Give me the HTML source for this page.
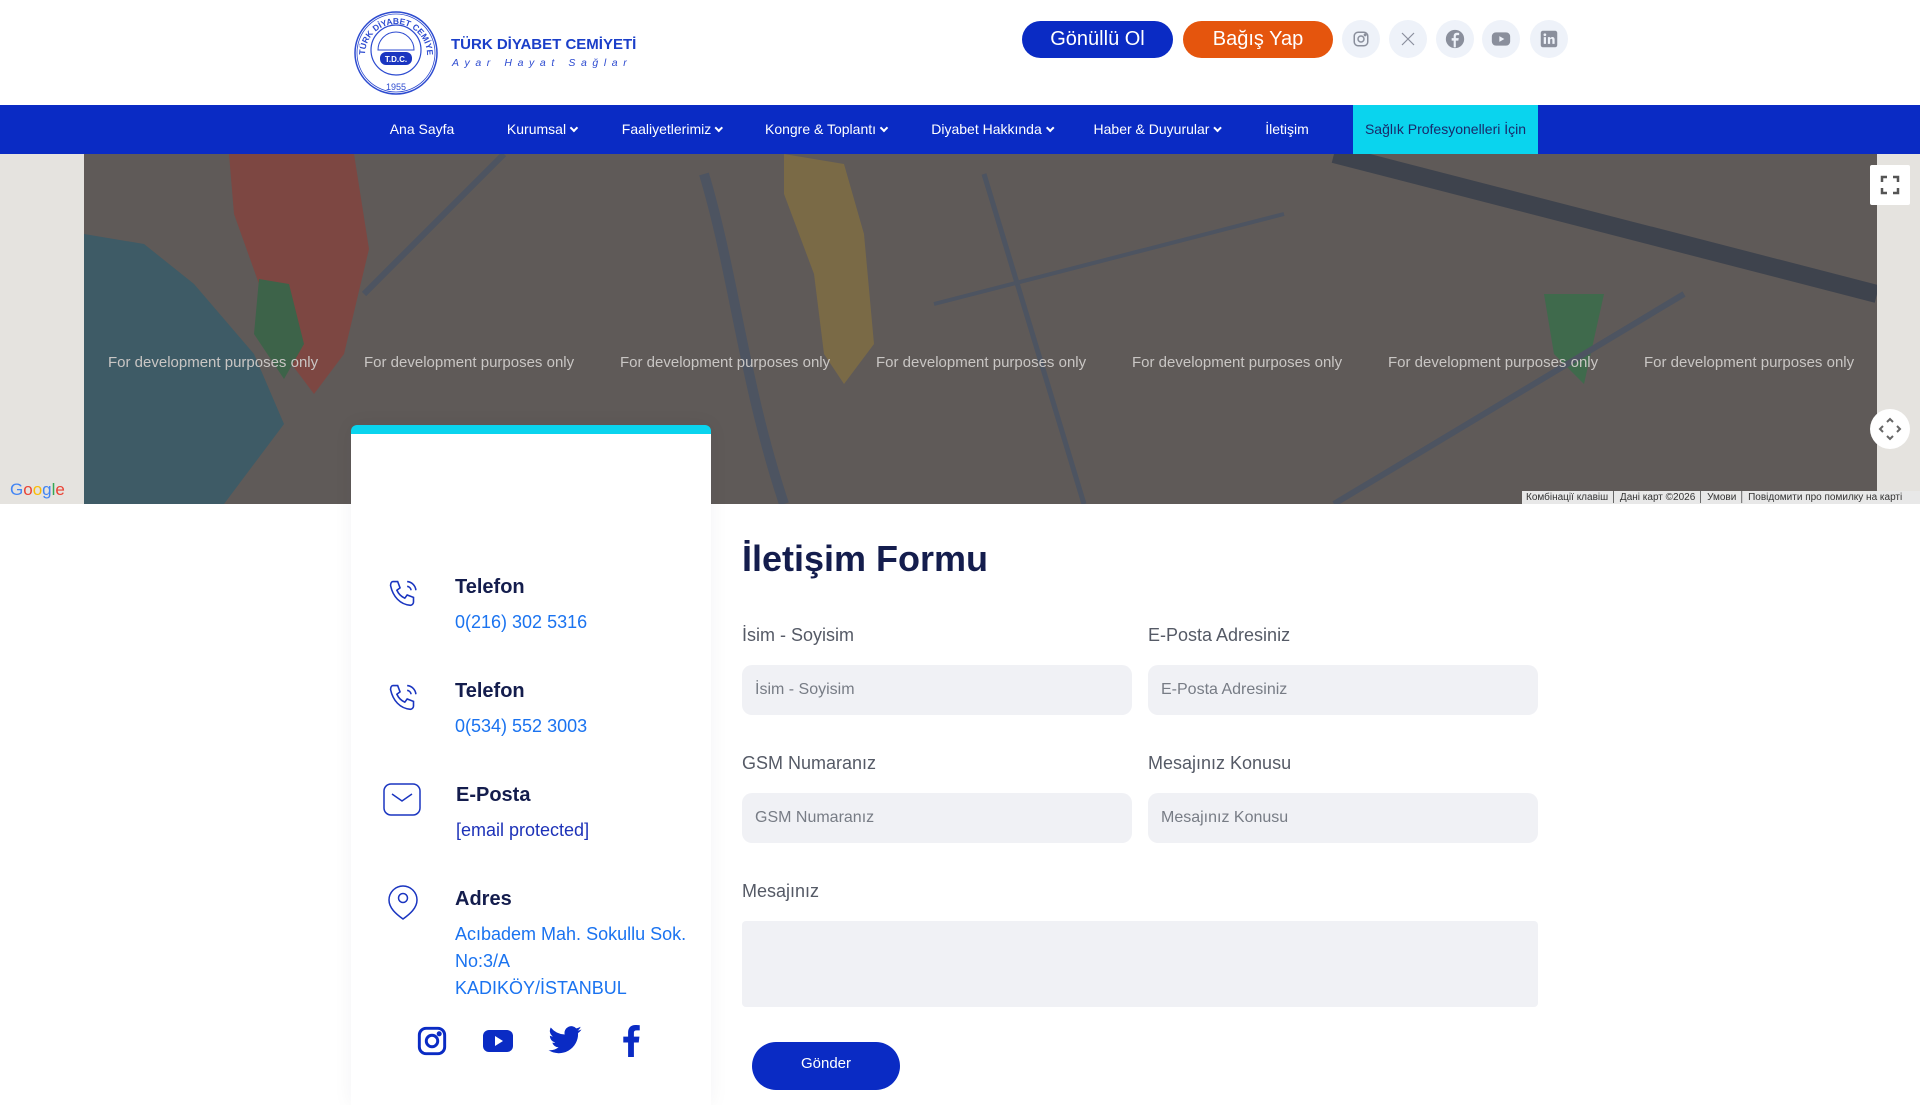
<!DOCTYPE html>
<html><head><meta charset="utf-8">
<style>
*{margin:0;padding:0;box-sizing:border-box}
body{width:1920px;height:1080px;overflow:hidden;background:#fff;font-family:"Liberation Sans",Arial,sans-serif;position:relative}
.abs{position:absolute}
.btn{position:absolute;top:21px;height:37px;border-radius:19px;color:#fff;font-size:20px;display:flex;align-items:center;justify-content:center}
.soc{position:absolute;top:20px;width:38px;height:38px;border-radius:50%;background:#eef2f9;display:flex;align-items:center;justify-content:center}
nav{position:absolute;top:105px;left:0;width:1920px;height:49px;background:#0a2bc4}
nav span{position:absolute;top:0;line-height:49px;color:#fff;font-size:14px;transform:translateX(-50%);white-space:nowrap}
nav span i{display:inline-block;width:6px;height:6px;border-right:2px solid #fff;border-bottom:2px solid #fff;transform:rotate(45deg);margin-left:5px;position:relative;top:-3px}
.map{position:absolute;top:154px;left:0;width:1920px;height:350px;background:#e5e3df;overflow:hidden}
.dev{position:absolute;top:200px;color:#c9c6c4;font-size:15px;white-space:nowrap}
.card{position:absolute;left:351px;top:425px;width:360px;height:680px;background:#fff;border-top:9px solid #0ad4ee;border-radius:6px 6px 0 0;box-shadow:0 0 20px rgba(0,0,60,.05)}
.it h4{position:absolute;left:104px;font-size:20px;color:#141d4d;font-weight:bold}
.it p{position:absolute;left:104px;font-size:18px;color:#1a73f0;line-height:27px}
label.l{position:absolute;font-size:18px;color:#555a66}
.inp{position:absolute;height:50px;background:#f0f1f5;border-radius:10px;font-size:16px;color:#777c85;padding-left:13px;line-height:50px}
</style></head><body>
<!-- logo -->
<svg class="abs" style="left:353px;top:10px" width="86" height="86" viewBox="0 0 86 86">
<circle cx="43" cy="43" r="41" fill="none" stroke="#2d4bd0" stroke-width="1.5"/>
<circle cx="43" cy="43" r="39" fill="none" stroke="#2d4bd0" stroke-width="0.8"/>
<circle cx="43" cy="40" r="25" fill="none" stroke="#2d4bd0" stroke-width="1.2"/>
<path d="M25 40 a18 18 0 0 1 36 0z" fill="none" stroke="#2d4bd0" stroke-width="1"/>
<rect x="27" y="42" width="32" height="13" rx="6" fill="#1a35c0"/>
<text x="43" y="52" font-size="8" fill="#fff" text-anchor="middle" font-family="Liberation Sans" font-weight="bold">T.D.C.</text>
<text x="43" y="80" font-size="9" fill="#2d4bd0" text-anchor="middle" font-family="Liberation Sans">1955</text>
<path id="arc" d="M12 45 A31 31 0 0 1 74 45" fill="none"/>
<text font-size="8.5" fill="#2d4bd0" font-family="Liberation Sans" font-weight="bold"><textPath href="#arc">TÜRK DİYABET CEMİYETİ</textPath></text>
</svg>
<div class="abs" style="left:451px;top:36px;font-size:15px;font-weight:bold;color:#1b3fc9">TÜRK DİYABET CEMİYETİ</div>
<div class="abs" style="left:452px;top:57px;font-size:10.5px;font-style:italic;color:#2d4bd0;letter-spacing:5.6px">Ayar Hayat Sağlar</div>
<!-- buttons -->
<div class="btn" style="left:1022px;width:151px;background:#0a2bc4">Gönüllü Ol</div>
<div class="btn" style="left:1183px;width:150px;background:#e5550d">Bağış Yap</div>
<div class="soc" style="left:1342px"><svg width="18" height="18" viewBox="0 0 24 24" fill="none" stroke="#8a8f9c" stroke-width="2"><rect x="3" y="3" width="18" height="18" rx="5"/><circle cx="12" cy="12" r="4"/><circle cx="17.5" cy="6.5" r="1" fill="#8a8f9c"/></svg></div>
<div class="soc" style="left:1389px"><svg width="16" height="16" viewBox="0 0 24 24" stroke="#8a8f9c" stroke-width="1.8"><path d="M3 3L21 21M21 3L3 21"/></svg></div>
<div class="soc" style="left:1436px"><svg width="20" height="20" viewBox="0 0 24 24"><circle cx="12" cy="12" r="11" fill="#8a8f9c"/><path d="M13 22v-8h3l.5-3H13V9c0-1 .4-1.6 1.7-1.6H17V4.7c-.5-.1-1.5-.2-2.6-.2-2.5 0-4 1.5-4 4.1V11H8v3h2.4v8z" fill="#eef2f9"/></svg></div>
<div class="soc" style="left:1482px"><svg width="20" height="20" viewBox="0 0 24 24"><rect x="1" y="4" width="22" height="16" rx="5" fill="#8a8f9c"/><path d="M10 8.5v7l6-3.5z" fill="#eef2f9"/></svg></div>
<div class="soc" style="left:1530px"><svg width="18" height="18" viewBox="0 0 24 24"><rect x="1" y="1" width="22" height="22" rx="3" fill="#8a8f9c"/><rect x="5" y="9.5" width="3" height="9" fill="#eef2f9"/><circle cx="6.5" cy="6.3" r="1.8" fill="#eef2f9"/><path d="M10.5 9.5h3v1.4c.6-1 1.7-1.6 3-1.6 2.3 0 3 1.5 3 3.8v5.4h-3v-4.8c0-1.2-.3-2-1.4-2s-1.6.8-1.6 2v4.8h-3z" fill="#eef2f9"/></svg></div>
<!-- nav -->
<nav>
<span style="left:422px">Ana Sayfa</span>
<span style="left:542px">Kurumsal<i></i></span>
<span style="left:672px">Faaliyetlerimiz<i></i></span>
<span style="left:826px">Kongre &amp; Toplantı<i></i></span>
<span style="left:992px">Diyabet Hakkında<i></i></span>
<span style="left:1157px">Haber &amp; Duyurular<i></i></span>
<span style="left:1287px">İletişim</span>
<div style="position:absolute;left:1353px;top:0;width:185px;height:49px;background:#0ad4ee;color:#1a2a6a;font-size:14px;line-height:49px;text-align:center">Sağlık Profesyonelleri İçin</div>
</nav>
<!-- map -->
<div class="map">
<div class="abs" style="left:84px;top:0;width:1793px;height:350px;background:#5f5a58"></div>
<svg class="abs" style="left:84px;top:0" width="1793" height="350" viewBox="0 0 1793 350">
<path d="M0 80 L0 350 L140 350 L200 270 L170 200 L110 130 L60 90Z" fill="#3e5b66"/>
<path d="M145 0 L270 0 L285 95 L260 200 L230 240 L200 200 L175 130 L150 60Z" fill="#7d4742"/>
<path d="M175 125 L205 130 L220 190 L200 225 L190 210 L170 180Z" fill="#3d6349"/>
<path d="M700 0 L760 10 L780 80 L790 190 L760 230 L740 200 L730 120 L700 40Z" fill="#7a6a46"/>
<path d="M1460 140 L1520 140 L1500 230 L1470 200Z" fill="#3f6a4c"/>
<path d="M620 20 C650 120 660 230 700 350" stroke="#4d5461" stroke-width="10" fill="none"/>
<path d="M1250 0 L1793 140" stroke="#3e434d" stroke-width="18" fill="none"/>
<path d="M420 0 L280 140" stroke="#4d5461" stroke-width="6" fill="none"/>
<path d="M900 20 L1000 350" stroke="#4d5461" stroke-width="5" fill="none"/>
<path d="M1600 140 L1250 350" stroke="#4d5461" stroke-width="6" fill="none"/>
<path d="M850 150 L1200 60" stroke="#4d5461" stroke-width="4" fill="none"/>
</svg>
<div class="dev" style="left:108px">For development purposes only</div>
<div class="dev" style="left:364px">For development purposes only</div>
<div class="dev" style="left:620px">For development purposes only</div>
<div class="dev" style="left:876px">For development purposes only</div>
<div class="dev" style="left:1132px">For development purposes only</div>
<div class="dev" style="left:1388px">For development purposes only</div>
<div class="dev" style="left:1644px">For development purposes only</div>
<div class="abs" style="left:10px;top:326px;font-size:17px;color:#4285f4">G<span style="color:#ea4335">o</span><span style="color:#fbbc05">o</span>g<span style="color:#34a853">l</span><span style="color:#ea4335">e</span></div>
<div class="abs" style="left:1522px;top:337px;height:13px;width:398px;background:#e8e8e8;font-size:10px;color:#333;line-height:13px;white-space:nowrap;padding-left:4px">Комбінації клавіш │ Дані карт ©2026 │ Умови │ Повідомити про помилку на карті</div>
<div class="abs" style="left:1870px;top:11px;width:40px;height:40px;background:#fff;border-radius:2px"><svg width="40" height="40" viewBox="0 0 40 40" fill="none" stroke="#555" stroke-width="2.5"><path d="M12 17v-5h5M23 12h5v5M28 23v5h-5M17 28h-5v-5"/></svg></div>
<div class="abs" style="left:1870px;top:255px;width:40px;height:40px;background:#fff;border-radius:50%"><svg width="40" height="40" viewBox="0 0 40 40" fill="none" stroke="#666" stroke-width="2"><path d="M17 13l3-3 3 3M17 27l3 3 3-3M13 17l-3 3 3 3M27 17l3 3-3 3"/></svg></div>
</div>
<!-- card -->
<div class="card">
<div class="it" style="position:absolute;top:-6px;left:0;width:100%">
<svg class="abs" style="left:34px;top:148px" width="38" height="38" viewBox="0 0 24 24" fill="none" stroke="#1a35c0" stroke-width="1"><path d="M5 3.5l3 0 1.5 4-2 1.5c1 2.2 2.8 4 5 5l1.5-2 4 1.5v3c0 1-1 2-2 2C9.5 18 5 13 3.5 6c0-1.5.7-2.5 1.5-2.5z"/><path d="M14 3.5a6 6 0 0 1 5.5 5.5M14 6.5a3 3 0 0 1 2.5 2.5"/></svg>
<h4 style="top:148px">Telefon</h4><p style="top:181px">0(216) 302 5316</p>
<svg class="abs" style="left:34px;top:252px" width="38" height="38" viewBox="0 0 24 24" fill="none" stroke="#1a35c0" stroke-width="1"><path d="M5 3.5l3 0 1.5 4-2 1.5c1 2.2 2.8 4 5 5l1.5-2 4 1.5v3c0 1-1 2-2 2C9.5 18 5 13 3.5 6c0-1.5.7-2.5 1.5-2.5z"/><path d="M14 3.5a6 6 0 0 1 5.5 5.5M14 6.5a3 3 0 0 1 2.5 2.5"/></svg>
<h4 style="top:252px">Telefon</h4><p style="top:285px">0(534) 552 3003</p>
<svg class="abs" style="left:32px;top:354px" width="40" height="36" viewBox="0 0 40 36" fill="none" stroke="#1a35c0" stroke-width="1.5"><rect x="1" y="2" width="36" height="31" rx="7"/><path d="M9 12l10 7 10-7"/></svg>
<h4 style="top:356px;left:105px">E-Posta</h4><p style="top:389px;left:105px;color:#1d32b8">[email protected]</p>
<svg class="abs" style="left:36px;top:455px" width="32" height="38" viewBox="0 0 32 38" fill="none" stroke="#1a35c0" stroke-width="1.5"><path d="M16 36C9 31 2 25 2 17a14 14 0 0 1 28 0c0 8-7 14-14 19z"/><circle cx="16" cy="15" r="4.5"/></svg>
<h4 style="top:460px">Adres</h4><p style="top:493px">Acıbadem Mah. Sokullu Sok.<br>No:3/A<br>KADIKÖY/İSTANBUL</p>
<svg class="abs" style="left:65px;top:597px" width="32" height="32" viewBox="0 0 24 24" fill="none" stroke="#0a2bc4" stroke-width="2.2"><rect x="2.5" y="2.5" width="19" height="19" rx="5"/><circle cx="12" cy="12" r="4.3"/><circle cx="17.4" cy="6.6" r="0.8" fill="#0a2bc4"/></svg>
<svg class="abs" style="left:131px;top:599px" width="32" height="28" viewBox="0 0 32 28"><rect x="1" y="3" width="30" height="22" rx="6" fill="#0a2bc4"/><path d="M13 9v10l8-5z" fill="#fff"/></svg>
<svg class="abs" style="left:196px;top:597px" width="36" height="32" viewBox="0 0 24 20"><path d="M23 2.3c-.8.4-1.7.6-2.6.7a4.5 4.5 0 0 0 2-2.5c-.9.5-1.9.9-2.9 1.1A4.5 4.5 0 0 0 11.8 5.7 12.8 12.8 0 0 1 2.5 1a4.5 4.5 0 0 0 1.4 6A4.4 4.4 0 0 1 1.9 6.5a4.5 4.5 0 0 0 3.6 4.5 4.5 4.5 0 0 1-2 .1 4.5 4.5 0 0 0 4.200 3.1A9 9 0 0 1 1 16.1a12.8 12.8 0 0 0 19.7-11.4c.9-.6 1.6-1.4 2.3-2.4z" fill="#0a2bc4"/></svg>
<svg class="abs" style="left:270px;top:597px" width="20" height="32" viewBox="0 0 12 22"><path d="M8 22V12h3.3l.5-4H8V5.6c0-1.1.3-1.9 1.9-1.9H12V.2C11.6.1 10.4 0 9 0 6 0 4 1.8 4 5.1V8H.7v4H4v10z" fill="#0a2bc4"/></svg>
</div>
</div>
<!-- form -->
<div class="abs" style="left:742px;top:538px;font-size:36px;font-weight:bold;color:#141d4d">İletişim Formu</div>
<label class="l" style="left:742px;top:625px">İsim - Soyisim</label>
<label class="l" style="left:1148px;top:625px">E-Posta Adresiniz</label>
<div class="inp" style="left:742px;top:665px;width:390px">İsim - Soyisim</div>
<div class="inp" style="left:1148px;top:665px;width:390px">E-Posta Adresiniz</div>
<label class="l" style="left:742px;top:753px">GSM Numaranız</label>
<label class="l" style="left:1148px;top:753px">Mesajınız Konusu</label>
<div class="inp" style="left:742px;top:793px;width:390px">GSM Numaranız</div>
<div class="inp" style="left:1148px;top:793px;width:390px">Mesajınız Konusu</div>
<label class="l" style="left:742px;top:881px">Mesajınız</label>
<div class="inp" style="left:742px;top:921px;width:796px;height:86px;border-radius:4px"></div>
<div class="abs" style="left:752px;top:1042px;width:148px;height:48px;border-radius:24px;background:#0a2bc4;color:#fff;font-size:15px;text-align:center;line-height:44px">Gönder</div>
</body></html>
